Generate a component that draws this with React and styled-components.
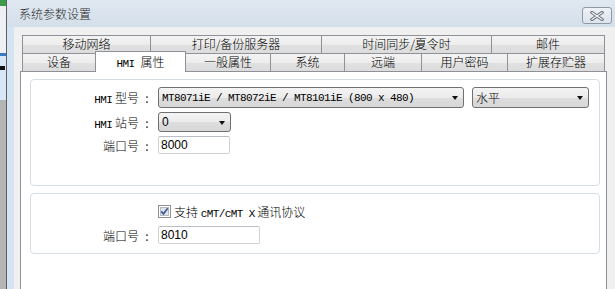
import React from "react";
import styled, { createGlobalStyle } from "styled-components";

const GlobalStyle = createGlobalStyle`
  html, body {
    margin: 0;
    padding: 0;
    overflow: hidden;
    background: #b4b4b4;
  }
  body {
    font-family: "Noto Sans CJK SC", "Liberation Sans", sans-serif;
    font-size: 12px;
    color: #000;
  }
`;

const cjk = `"Noto Sans CJK SC", "Liberation Sans", sans-serif`;

const rowOneTabs = [
  { label: "移动网络", w: 129 },
  { label: "打印/备份服务器", w: 172 },
  { label: "时间同步/夏令时", w: 171 },
  { label: "邮件", w: 114 },
];

const rowTwoTabs = [
  { label: "设备", w: 74 },
  { label: "属性", prefix: "HMI", w: 91, active: true },
  { label: "一般属性", w: 86 },
  { label: "系统", w: 75 },
  { label: "远端", w: 78 },
  { label: "用户密码", w: 87 },
  { label: "扩展存贮器", w: 98 },
];

const SettingsDialog = () => {
  return (
    <Screen>
      <GlobalStyle />
      <BackApp>
        <AppIcon />
        <AppGap />
        <AppLine />
        <AppToolbar>
          <ToolMark />
        </AppToolbar>
        <AppRest />
      </BackApp>
      <Dialog>
        <TitleBar>
          <Title>系统参数设置</Title>
          <CloseButton>
            <svg width="14" height="10" viewBox="0 0 14 10">
              <path d="M2 1.5 L12 8.5 M12 1.5 L2 8.5" stroke="#6a6f78" strokeWidth="3.2" strokeLinecap="square" />
              <path d="M2 1.5 L12 8.5 M12 1.5 L2 8.5" stroke="#f4f6f8" strokeWidth="1.2" strokeLinecap="square" />
            </svg>
          </CloseButton>
        </TitleBar>
        <Body>
          <TabControl>
            <TabRow>
              {rowOneTabs.map((t, i) => (
                <Tab key={i} w={t.w}>{t.label}</Tab>
              ))}
            </TabRow>
            <TabRow>
              {rowTwoTabs.map((t, i) => (
                <Tab key={i} w={t.w} $active={t.active}>
                  {t.prefix && <Mono>{t.prefix} </Mono>}
                  {t.label}
                </Tab>
              ))}
            </TabRow>
            <Panel>
              <Group h={107}>
                <Grid>
                  <Label><Mono>HMI</Mono> 型号</Label>
                  <Colon>:</Colon>
                  <Controls>
                    <Select w={306} h={21}>
                      <SelectText $mono>MT8071iE / MT8072iE / MT8101iE (800 x 480)</SelectText>
                      <Arrow />
                    </Select>
                    <Select w={117} h={21}>
                      <SelectText>水平</SelectText>
                      <Arrow />
                    </Select>
                  </Controls>

                  <Label><Mono>HMI</Mono> 站号</Label>
                  <Colon>:</Colon>
                  <Controls>
                    <Select w={73} h={20}>
                      <SelectText>0</SelectText>
                      <Arrow />
                    </Select>
                  </Controls>

                  <Label>端口号</Label>
                  <Colon>:</Colon>
                  <Controls>
                    <TextBox w={72}>8000</TextBox>
                  </Controls>
                </Grid>
              </Group>
              <Group h={61}>
                <Grid $second>
                  <span />
                  <span />
                  <Controls>
                    <Check>
                      <svg width="13" height="13" viewBox="0 0 13 13">
                        <rect x="0.5" y="0.5" width="12" height="12" fill="#fff" stroke="#8f8f8f" />
                        <rect x="2.5" y="2.5" width="8" height="8" fill="#dfe3ea" stroke="#b4b9c2" />
                        <path d="M3.3 6.4 L5.4 8.8 L9.8 3.2" fill="none" stroke="#3e5a94" strokeWidth="1.7" />
                      </svg>
                      <span>支持 <Mono>cMT/cMT X</Mono> 通讯协议</span>
                    </Check>
                  </Controls>

                  <Label>端口号</Label>
                  <Colon>:</Colon>
                  <Controls>
                    <TextBox w={102}>8010</TextBox>
                  </Controls>
                </Grid>
              </Group>
            </Panel>
          </TabControl>
        </Body>
      </Dialog>
    </Screen>
  );
};

const Screen = styled.div`
  display: flex;
  width: 615px;
  height: 289px;
  overflow: hidden;
`;

const BackApp = styled.div`
  width: 6px;
  display: flex;
  flex-direction: column;
  background: #b4b4b4;
`;

const AppIcon = styled.div`
  height: 6px;
  background: #3d9a4a;
`;

const AppGap = styled.div`
  height: 47px;
  background: #eef0f3;
`;

const AppLine = styled.div`
  height: 3px;
  background: #3a78c8;
`;

const AppToolbar = styled.div`
  height: 44px;
  background: #d8e6f5;
  display: flex;
  align-items: flex-start;
  padding-top: 10px;
  box-sizing: border-box;
`;

const ToolMark = styled.div`
  width: 5px;
  height: 4px;
  background: #111;
`;

const AppRest = styled.div`
  flex: 1;
  background: #b4b4b4;
`;

const Dialog = styled.div`
  flex: 1;
  display: flex;
  flex-direction: column;
  border-left: 1px solid #5c5f66;
  background: #d6e3f2;
`;

const TitleBar = styled.div`
  height: 27px;
  flex-shrink: 0;
  display: flex;
  align-items: flex-start;
  justify-content: space-between;
  background: linear-gradient(#e0e8f1, #d4dfea);
`;

const Title = styled.div`
  font-family: ${cjk};
  font-weight: 300;
  font-size: 12px;
  line-height: 14px;
  color: #2a2a2a;
  padding: 7px 0 0 12px;
`;

const CloseButton = styled.div`
  box-sizing: border-box;
  width: 30px;
  height: 17px;
  margin: 7px 3px 0 0;
  border: 1px solid #8f99a6;
  border-radius: 3px;
  background: linear-gradient(#eef2f6, #dce3eb);
  display: flex;
  align-items: center;
  justify-content: center;
`;

const Body = styled.div`
  flex: 1;
  margin-left: 7px;
  background: #f0f0f0;
  padding: 8px 0 0 6px;
`;

const TabControl = styled.div`
  width: 587px;
  display: flex;
  flex-direction: column;
`;

const TabRow = styled.div`
  display: flex;
  align-items: flex-start;
  height: 18px;
  padding: 0 2px;
`;

const Tab = styled.div`
  box-sizing: border-box;
  flex-shrink: 0;
  width: ${(p) => p.w}px;
  height: ${(p) => (p.$active ? 21 : 18)}px;
  margin-left: -1px;
  margin-top: ${(p) => (p.$active ? -2 : 0)}px;
  position: relative;
  z-index: ${(p) => (p.$active ? 2 : 1)};
  border: 1px solid #8e9198;
  border-bottom: none;
  background: ${(p) =>
    p.$active ? "#fff" : "linear-gradient(#f3f3f3, #ededed 50%, #e0e0e0 51%, #dcdcdc)"};
  font-family: ${cjk};
  font-weight: 300;
  font-size: 12px;
  line-height: ${(p) => (p.$active ? 19 : 16)}px;
  text-align: center;
  white-space: nowrap;
  &:first-child {
    margin-left: 0;
  }
`;

const Mono = styled.span`
  font-family: "Liberation Mono", "DejaVu Sans Mono", monospace;
  font-weight: 400;
  font-size: 11px;
  letter-spacing: -0.6px;
`;

const Panel = styled.div`
  height: 230px;
  border: 1px solid #8e9198;
  background: #fff;
  padding: 7px 6px 0 9px;
  display: flex;
  flex-direction: column;
  gap: 7px;
`;

const Group = styled.div`
  box-sizing: border-box;
  height: ${(p) => p.h}px;
  border: 1px solid #d5dee6;
  border-radius: 4px;
  padding-top: ${(p) => (p.h > 80 ? 7 : 10)}px;
`;

const Grid = styled.div`
  display: grid;
  grid-template-columns: 108px 16px 1fr;
  grid-template-rows: ${(p) => (p.$second ? "15px 18px" : "21px 20px 18px")};
  row-gap: ${(p) => (p.$second ? 7 : 4)}px;
  align-items: center;
`;

const Label = styled.div`
  text-align: right;
  font-family: ${cjk};
  font-weight: 300;
  font-size: 12px;
  white-space: nowrap;
`;

const Colon = styled.div`
  text-align: center;
  font-family: ${cjk};
  font-size: 12px;
  color: #222;
`;

const Controls = styled.div`
  display: flex;
  align-items: center;
  gap: 8px;
  margin-left: 3px;
  height: 100%;
`;

const Select = styled.div`
  box-sizing: border-box;
  flex-shrink: 0;
  width: ${(p) => p.w}px;
  height: ${(p) => p.h}px;
  border: 1px solid #707070;
  border-radius: 3px;
  background: linear-gradient(#f4f4f4, #ebebeb 50%, #dedede 51%, #d6d6d6);
  display: flex;
  align-items: center;
  justify-content: space-between;
  padding: 0 5px 0 3px;
`;

const SelectText = styled.span`
  font-family: ${(p) =>
    p.$mono ? `"Liberation Mono", monospace` : `"Liberation Sans", ${cjk}`};
  font-weight: ${(p) => (p.$mono ? 400 : 300)};
  font-size: ${(p) => (p.$mono ? 11 : 12)}px;
  letter-spacing: ${(p) => (p.$mono ? -0.6 : 0)}px;
  white-space: nowrap;
`;

const Arrow = styled.span`
  width: 0;
  height: 0;
  border-left: 3.5px solid transparent;
  border-right: 3.5px solid transparent;
  border-top: 4px solid #111;
  margin-top: 1px;
`;

const TextBox = styled.div`
  box-sizing: border-box;
  width: ${(p) => p.w}px;
  height: 18px;
  border: 1px solid #cfd3d9;
  border-top-color: #b9bec6;
  border-radius: 2px;
  background: #fff;
  font-family: "Liberation Sans", sans-serif;
  font-size: 12px;
  line-height: 16px;
  padding-left: 2px;
`;

const Check = styled.div`
  display: flex;
  align-items: center;
  gap: 3px;
  font-family: ${cjk};
  font-weight: 300;
  font-size: 12px;
  white-space: nowrap;
`;

export default SettingsDialog;
